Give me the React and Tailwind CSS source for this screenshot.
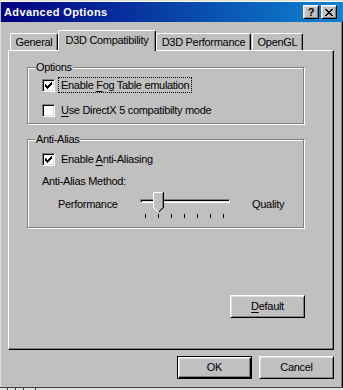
import React from "react";

const FONT = "font-['Liberation_Sans',Arial,sans-serif] text-[11px] leading-[13px] tracking-[-0.3px]";

function CheckMark() {
  return (
    <svg width="7" height="7" viewBox="0 0 7 7" shapeRendering="crispEdges">
      <path
        fill="#000"
        d="M0 2h1v3H0zM1 3h1v3H1zM2 4h1v3H2zM3 3h1v3H3zM4 2h1v3H4zM5 1h1v3H5zM6 0h1v3H6z"
      />
    </svg>
  );
}

function CloseGlyph() {
  return (
    <svg width="8" height="7" viewBox="0 0 8 7" shapeRendering="crispEdges">
      <path
        fill="#000"
        d="M0 0h2v1H0zM6 0h2v1H6zM1 1h2v1H1zM5 1h2v1H5zM2 2h4v1H2zM3 3h2v1H3zM2 4h4v1H2zM1 5h2v1H1zM5 5h2v1H5zM0 6h2v1H0zM6 6h2v1H6z"
      />
    </svg>
  );
}

function CheckBox({ checked }) {
  return (
    <span className="w-[13px] h-[13px] shrink-0 flex items-center justify-center bg-white border border-t-[#808080] border-l-[#808080] border-r-white border-b-white shadow-[inset_1px_1px_0_#000,inset_-1px_-1px_0_#dfdfdf]">
      {checked && <CheckMark />}
    </span>
  );
}

function CheckRow({ checked, focused, children }) {
  return (
    <div className="flex items-center h-[16px]">
      <CheckBox checked={checked} />
      <span
        className={
          "ml-[3px] px-[2px] h-[16px] block leading-[14px] whitespace-nowrap border " +
          (focused ? "border-dotted border-black" : "border-transparent")
        }
      >
        {children}
      </span>
    </div>
  );
}

function U({ children }) {
  return <span className="underline decoration-1 underline-offset-[2px]">{children}</span>;
}

function Button({ children, def, className = "" }) {
  return (
    <div
      className={
        "w-[75px] h-[23px] flex items-center justify-center bg-[#c0c0c0] " +
        (def
          ? "border border-black shadow-[inset_1px_1px_0_#fff,inset_-1px_-1px_0_#000,inset_-2px_-2px_0_#808080,inset_2px_2px_0_#dfdfdf] "
          : "border border-t-white border-l-white border-r-black border-b-black shadow-[inset_1px_1px_0_#dfdfdf,inset_-1px_-1px_0_#808080] ") +
        className
      }
    >
      <span className="whitespace-nowrap">{children}</span>
    </div>
  );
}

function Tab({ children, selected, w }) {
  return (
    <div
      className={
        "flex justify-center bg-[#c0c0c0] border-l border-t border-r border-l-white border-t-white border-r-black shadow-[inset_-1px_0_0_#808080] rounded-t-[2px] " +
        (selected ? "h-[21px] mb-[-1px] relative z-10 pt-[3px]" : "h-[17px] pt-[2px]")
      }
      style={{ width: w }}
    >
      <span className="whitespace-nowrap">{children}</span>
    </div>
  );
}

function Slider() {
  const ticks = [5, 18, 31, 44, 57, 70, 83];
  return (
    <div className="relative w-[90px] h-[27px]">
      <div className="absolute left-0 top-[7px] w-[90px] h-[4px] border border-t-[#808080] border-l-[#808080] border-r-white border-b-white shadow-[inset_1px_1px_0_#000,inset_-1px_-1px_0_#dfdfdf]" />
      {ticks.map((x) => (
        <div key={x} className="absolute top-[22px] w-[1px] h-[4px] bg-black" style={{ left: x }} />
      ))}
      <svg
        className="absolute left-[13px] top-0"
        width="11"
        height="21"
        viewBox="0 0 11 21"
        shapeRendering="crispEdges"
      >
        <polygon points="0,0 11,0 11,16 5.5,21 0,16" fill="#c0c0c0" />
        <path d="M0.5 16 V0.5 H10" stroke="#fff" fill="none" />
        <path d="M0.5 15.5 L5.5 20.5" stroke="#fff" fill="none" />
        <path d="M10.5 0 V15.5 L5.5 20.5" stroke="#000" fill="none" />
        <path d="M9.5 1 V15.5 L5.5 19.5" stroke="#808080" fill="none" />
      </svg>
    </div>
  );
}

export default function App() {
  return (
    <div className={"w-[343px] h-[390px] bg-[#c0c0c0] flex flex-col overflow-hidden text-black " + FONT}>
      <div className="h-[2px] border-t border-[#dfdfdf] bg-white" />
      {/* Title bar */}
      <div className="ml-[1px] h-[20px] bg-[linear-gradient(to_right,#000080,#1084d0)] flex items-center justify-between pl-[3px] pr-[6px]">
        <span className="text-white font-bold tracking-[0.4px]">Advanced Options</span>
        <div className="flex gap-[2px]">
          <div className="w-[16px] h-[14px] bg-[#c0c0c0] border border-t-white border-l-white border-r-black border-b-black shadow-[inset_1px_1px_0_#dfdfdf,inset_-1px_-1px_0_#808080] flex items-center justify-center font-bold text-[11px] leading-[11px]">
            ?
          </div>
          <div className="w-[16px] h-[14px] bg-[#c0c0c0] border border-t-white border-l-white border-r-black border-b-black shadow-[inset_1px_1px_0_#dfdfdf,inset_-1px_-1px_0_#808080] flex items-center justify-center">
            <CloseGlyph />
          </div>
        </div>
      </div>
      {/* Body */}
      <div className="flex-1 flex flex-col border-l border-l-[#dfdfdf] border-r border-r-black shadow-[inset_-1px_0_0_#808080] pl-[7px]">
        <div className="pt-[8px] h-[28px] flex items-end pl-[2px]">
          <Tab w={48}>General</Tab>
          <Tab w={98} selected>D3D Compatibility</Tab>
          <Tab w={95}>D3D Performance</Tab>
          <div className="ml-[1px]">
            <Tab w={51}>OpenGL</Tab>
          </div>
        </div>
        {/* Panel */}
        <div className="w-[326px] h-[300px] flex flex-col border border-t-white border-l-white border-r-black border-b-black shadow-[inset_-1px_-1px_0_#808080]">
          <fieldset className="mt-[10px] ml-[18px] w-[277px] border border-[#808080] shadow-[1px_1px_0_#fff,inset_1px_1px_0_#fff]">
            <legend className="ml-[7px] px-[1px] bg-[#c0c0c0]">Options</legend>
            <div className="pl-[14px] pt-[3px] pb-[5px] flex flex-col gap-[9px]">
              <CheckRow checked focused>
                Enable <U>F</U>og Table emulation
              </CheckRow>
              <CheckRow>
                <U>U</U>se DirectX 5 compatibilty mode
              </CheckRow>
            </div>
          </fieldset>
          <fieldset className="mt-[9px] ml-[18px] w-[277px] border border-[#808080] shadow-[1px_1px_0_#fff,inset_1px_1px_0_#fff]">
            <legend className="ml-[7px] px-[1px] bg-[#c0c0c0]">Anti-Alias</legend>
            <div className="pl-[14px] pt-[5px] pb-[8px] flex flex-col">
              <CheckRow checked>
                Enable <U>A</U>nti-Aliasing
              </CheckRow>
              <div className="mt-[8px]">Anti-Alias Method:</div>
              <div className="mt-[4px] ml-[16px] flex items-start">
                <span className="w-[82px] mt-[6px]">Performance</span>
                <Slider />
                <span className="ml-[22px] mt-[6px]">Quality</span>
              </div>
            </div>
          </fieldset>
          <Button className="mt-[67px] ml-[221px]">
            <U>D</U>efault
          </Button>
        </div>
        <div className="w-[326px] mt-[6px] flex justify-end gap-[7px]">
          <Button def>OK</Button>
          <Button>Cancel</Button>
        </div>
      </div>
      {/* bottom edge */}
      <div className="h-[3px] border-t border-[#404040] bg-[#dfdfdf] flex">
        <div className="w-[7px]" />
        <div className="w-[1px] bg-[#404040]" />
        <div className="w-[7px]" />
        <div className="w-[1px] bg-[#404040]" />
        <div className="w-[7px]" />
        <div className="w-[1px] bg-[#404040]" />
        <div className="w-[11px]" />
        <div className="w-[1px] bg-[#404040]" />
      </div>
    </div>
  );
}
